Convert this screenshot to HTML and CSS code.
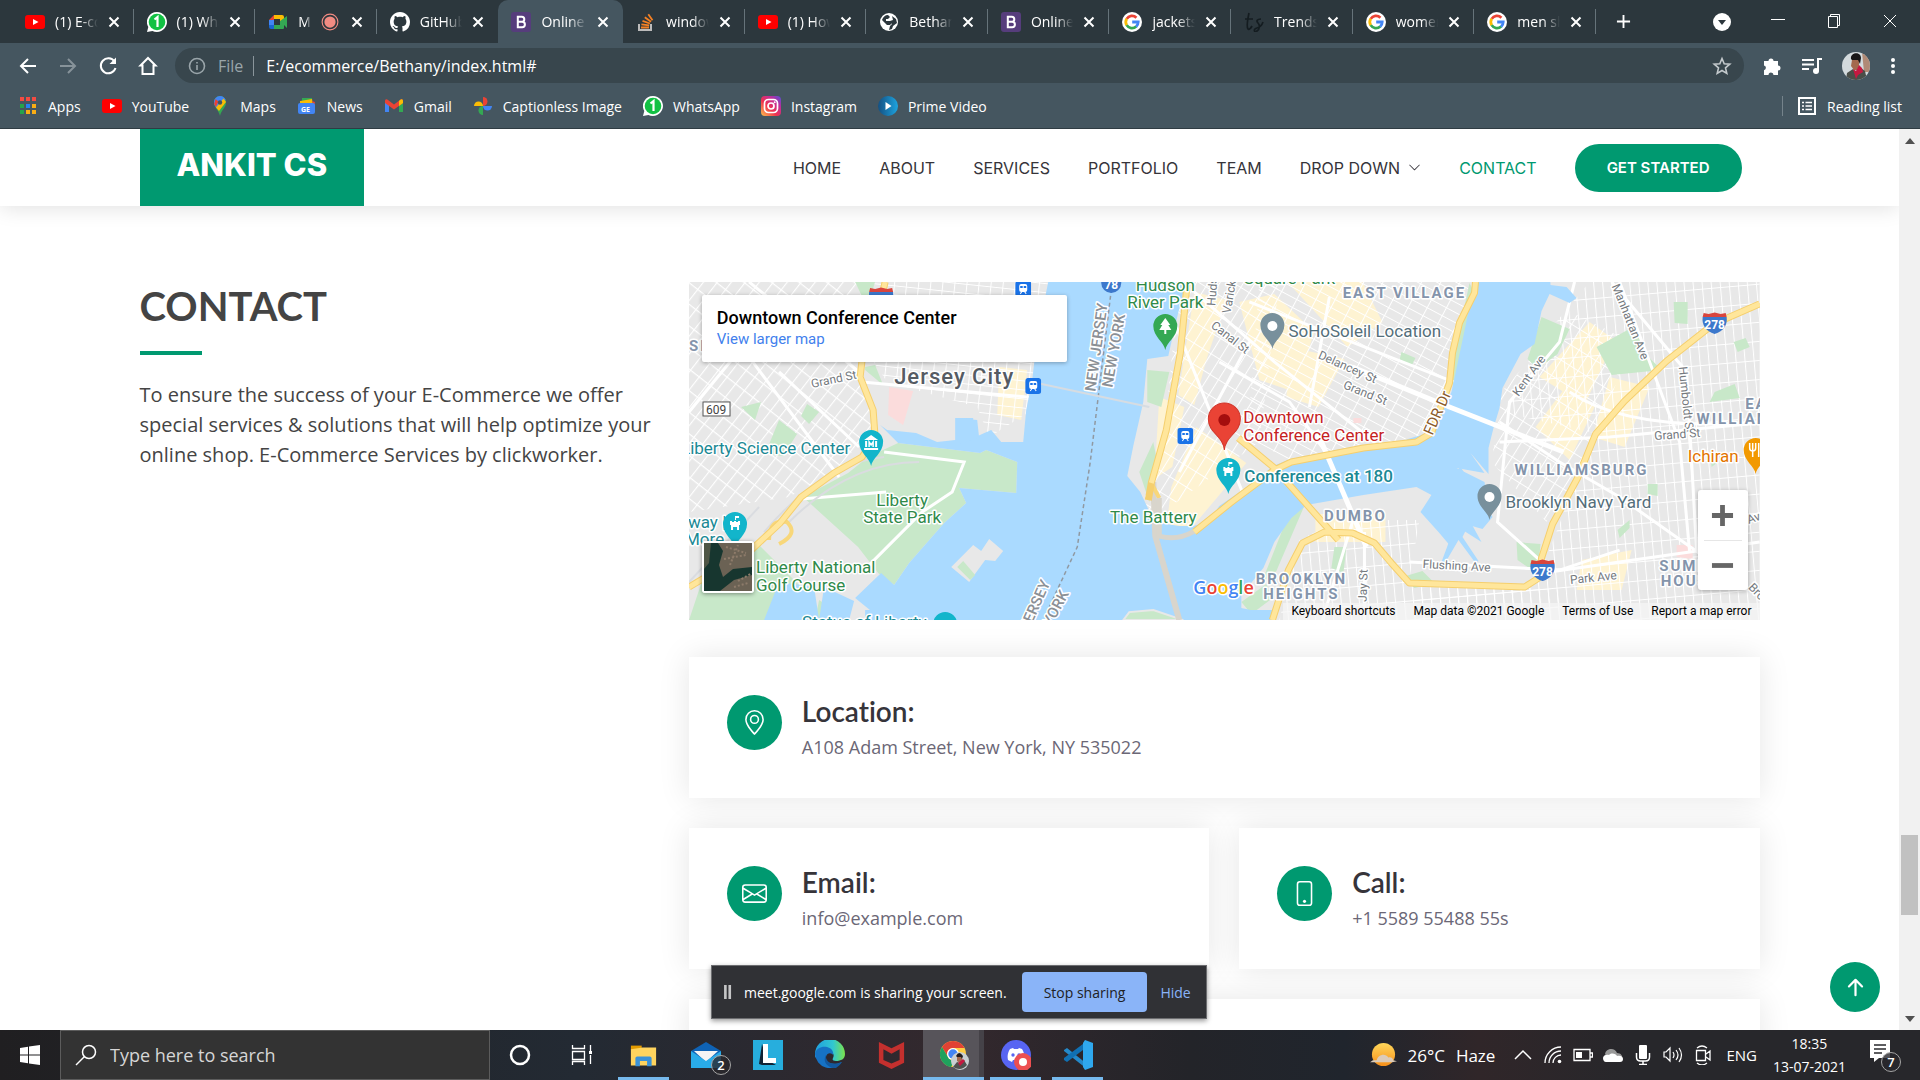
FILE: index.html
```html
<!DOCTYPE html>
<html lang="en">
<head>
<meta charset="utf-8">
<meta name="viewport" content="width=device-width, initial-scale=1">
<title>Online shop - Contact</title>
<link rel="stylesheet" href="styles.css">
</head>
<body>
<svg class="sprite" aria-hidden="true">
  <symbol id="i-close" viewBox="0 0 12 12"><path d="M1.500 1.500l9 9m0-9l-9 9" stroke="currentColor" stroke-width="2" fill="none"/></symbol>
  <symbol id="i-youtube" viewBox="0 0 20 20"><rect y="3" width="20" height="14" rx="3" fill="#f00"/><path d="M8 7l5.500 3L8 13z" fill="#fff"/></symbol>
  <symbol id="i-whatsapp" viewBox="0 0 20 20"><path d="M10 0a10 10 0 1 1-4.600 18.900L0 20l1.300-5A10 10 0 0 1 10 0z" fill="#fff"/><circle cx="10" cy="10" r="8.300" fill="#12c143"/><path d="M7.500 7.500L10.500 5v10" stroke="#fff" stroke-width="2.200" fill="none"/></symbol>
  <symbol id="i-bootstrap" viewBox="0 0 20 20"><rect width="20" height="20" rx="3" fill="#563d7c"/><path d="M6.800 4.800h4a2.500 2.500 0 0 1 0 5h-4zm0 5h4.400a2.700 2.700 0 0 1 0 5.400H6.800z" fill="none" stroke="#fff" stroke-width="2"/></symbol>
  <symbol id="i-google" viewBox="0 0 20 20"><circle cx="10" cy="10" r="10" fill="#fff"/><g fill="none" stroke-width="2.800"><path d="M4.700 6.900A6.200 6.200 0 0 1 14.400 5.700" stroke="#ea4335"/><path d="M4.700 13.200A6.200 6.200 0 0 1 4.700 6.800" stroke="#fbbc05"/><path d="M14.200 14.500A6.200 6.200 0 0 1 4.700 13.100" stroke="#34a853"/><path d="M10.200 10h6a6.200 6.200 0 0 1-2.100 4.600" stroke="#4285f4"/></g></symbol>
  <symbol id="i-github" viewBox="0 0 16 16"><path fill="#fff" d="M8 0C3.580 0 0 3.580 0 8c0 3.540 2.290 6.530 5.470 7.590.4.070.55-.17.55-.38 0-.19-.01-.82-.01-1.490-2.010.37-2.530-.49-2.690-.94-.09-.23-.48-.94-.82-1.130-.28-.15-.68-.52-.01-.53.63-.01 1.080.58 1.230.82.72 1.210 1.870.87 2.330.66.070-.52.28-.87.51-1.070-1.780-.2-3.640-.89-3.640-3.950 0-.87.31-1.590.82-2.150-.08-.2-.36-1.020.08-2.120 0 0 .67-.21 2.200.82.64-.18 1.320-.27 2-.27s1.360.09 2 .27c1.530-1.040 2.200-.82 2.200-.82.44 1.100.16 1.920.08 2.120.51.56.82 1.270.82 2.150 0 3.070-1.870 3.750-3.650 3.950.29.25.54.73.54 1.480 0 1.070-.01 1.930-.01 2.200 0 .21.15.46.55.38A8.010 8.010 0 0 0 16 8c0-4.420-3.580-8-8-8z"/></symbol>
  <symbol id="i-pin" viewBox="0 0 26 38"><path d="M13 37c-1-8-12-13-12-24a12 12 0 0 1 24 0c0 11-11 16-12 24z" fill="currentColor"/></symbol>
  <symbol id="i-shield" viewBox="0 0 26 22"><path d="M1 5h24c1 8-3 14-12 17C4 19 0 13 1 5z" fill="#3c78cc"/><path d="M2 1l5 1 6-1.500L19 2l5-1 1 4H1z" fill="#d9453d"/></symbol>
  <symbol id="i-train" viewBox="0 0 16 16"><rect width="16" height="16" rx="3" fill="#1a73e8"/><rect x="4" y="3" width="8" height="8" rx="2" fill="#fff"/><path d="M5 5h2.500v2H5zm3.500 0H11v2H8.500z" fill="#1a73e8"/><path d="M5 13l1.500-2m4.500 2l-1.500-2" stroke="#fff"/></symbol>
  <symbol id="i-tower" viewBox="0 0 14 14"><path d="M7 0h4v2H8v2h-1zM2 5h2v1h2V5h2v1h2V5h2v4h-1v5H9v-3H5v3H3V9H2z" fill="#fff"/></symbol>
</svg>

<header class="browser">
  <div class="tabstrip">
    <div class="tabs">
      <div class="tab"><svg class="fav"><use href="#i-youtube"/></svg><span class="tab-title">(1) E-commerce</span><button class="tab-x" aria-label="Close tab"><svg><use href="#i-close"/></svg></button></div>
      <div class="tab"><svg class="fav"><use href="#i-whatsapp"/></svg><span class="tab-title">(1) WhatsApp</span><button class="tab-x" aria-label="Close tab"><svg><use href="#i-close"/></svg></button></div>
      <div class="tab"><svg class="fav" viewBox="0 0 20 20"><path d="M1 8l5-5v5z" fill="#ea4335"/><path d="M6 3h8a2 2 0 0 1 2 2v4h-4V7H6z" fill="#fbbc04"/><path d="M1 8h5v5H1z" fill="#4285f4"/><path d="M1 13h5v4H3a2 2 0 0 1-2-2z" fill="#1967d2"/><path d="M6 13h6V9l7-5v12l-3-3v3a1 1 0 0 1-1 1H6z" fill="#34a853"/></svg><span class="tab-title">Meet</span><svg class="rec" viewBox="0 0 16 16"><circle cx="8" cy="8" r="7" fill="none" stroke="#f28b82" stroke-width="1"/><circle cx="8" cy="8" r="5" fill="#f28b82"/></svg><button class="tab-x" aria-label="Close tab"><svg><use href="#i-close"/></svg></button></div>
      <div class="tab"><svg class="fav"><use href="#i-github"/></svg><span class="tab-title">GitHub - shop</span><button class="tab-x" aria-label="Close tab"><svg><use href="#i-close"/></svg></button></div>
      <div class="tab tab-active"><svg class="fav"><use href="#i-bootstrap"/></svg><span class="tab-title">Online shop</span><button class="tab-x" aria-label="Close tab"><svg><use href="#i-close"/></svg></button></div>
      <div class="tab"><svg class="fav" viewBox="0 0 20 20"><path d="M3 12v6h12v-6" fill="none" stroke="#bcbbbb" stroke-width="2"/><path d="M5 15.500h8M5.400 12.300l7.800 1M6.500 8.800l7.400 2.700M8.800 5.300l6.200 4.500M12.300 2.300l4.200 6" stroke="#f48024" stroke-width="1.800"/></svg><span class="tab-title">windows - stack</span><button class="tab-x" aria-label="Close tab"><svg><use href="#i-close"/></svg></button></div>
      <div class="tab"><svg class="fav"><use href="#i-youtube"/></svg><span class="tab-title">(1) How to</span><button class="tab-x" aria-label="Close tab"><svg><use href="#i-close"/></svg></button></div>
      <div class="tab"><svg class="fav" viewBox="0 0 20 20"><circle cx="10" cy="10" r="9" fill="#fff"/><path d="M3 8c1-3 3-5 6-5l2 2-2 2H7v2h4l2 2-2 2H8zM13 4l4 3 1 4-4 3-1 3-3 1 1-4 2-2-2-3 3-1z" fill="#2c373d"/></svg><span class="tab-title">Bethany</span><button class="tab-x" aria-label="Close tab"><svg><use href="#i-close"/></svg></button></div>
      <div class="tab"><svg class="fav"><use href="#i-bootstrap"/></svg><span class="tab-title">Online shop</span><button class="tab-x" aria-label="Close tab"><svg><use href="#i-close"/></svg></button></div>
      <div class="tab"><svg class="fav"><use href="#i-google"/></svg><span class="tab-title">jackets for</span><button class="tab-x" aria-label="Close tab"><svg><use href="#i-close"/></svg></button></div>
      <div class="tab"><svg class="fav" viewBox="0 0 20 20"><path d="M5 1C4 6 2 14 4 17c1 1 3-1 4-3M1 7h8M17 7c-4 0-5 2-3 4s2 6-1 8-4-2 0-3 5-3 6-6" fill="none" stroke="#141c20" stroke-width="1.700"/></svg><span class="tab-title">Trends shop</span><button class="tab-x" aria-label="Close tab"><svg><use href="#i-close"/></svg></button></div>
      <div class="tab"><svg class="fav"><use href="#i-google"/></svg><span class="tab-title">women</span><button class="tab-x" aria-label="Close tab"><svg><use href="#i-close"/></svg></button></div>
      <div class="tab"><svg class="fav"><use href="#i-google"/></svg><span class="tab-title">men shirts</span><button class="tab-x" aria-label="Close tab"><svg><use href="#i-close"/></svg></button></div>
    </div>
    <button class="new-tab" aria-label="New tab"><svg viewBox="0 0 16 16"><path d="M8 1v14M1 8h14" stroke="#fff" stroke-width="2"/></svg></button>
    <div class="window-controls">
      <button aria-label="Search tabs"><svg viewBox="0 0 20 20"><circle cx="10" cy="10" r="9" fill="#fff"/><path d="M6 8h8l-4 5z" fill="#2c373d"/></svg></button>
      <button aria-label="Minimize"><svg viewBox="0 0 20 20"><path d="M3 7.500h14" stroke="#fff"/></svg></button>
      <button aria-label="Restore"><svg viewBox="0 0 20 20"><path d="M4.500 4.500h9v11h-9zM6.500 4V2.500h9v11H14" fill="none" stroke="#fff"/></svg></button>
      <button aria-label="Close window"><svg viewBox="0 0 20 20"><path d="M4 3l12 12M16 3L4 15" stroke="#fff"/></svg></button>
    </div>
  </div>
  <div class="toolbar">
    <button class="tool" aria-label="Back"><svg viewBox="0 0 20 20"><path d="M18 10H3M10 3l-7 7 7 7" fill="none" stroke="#fff" stroke-width="2"/></svg></button>
    <button class="tool" aria-label="Forward"><svg viewBox="0 0 20 20"><path d="M2 10h15M10 3l7 7-7 7" fill="none" stroke="#87939a" stroke-width="2"/></svg></button>
    <button class="tool" aria-label="Reload"><svg viewBox="0 0 20 20"><path d="M16.500 5.500A7.500 7.500 0 1 0 17.500 12" fill="none" stroke="#fff" stroke-width="2"/><path d="M18 1.500V8h-6.500z" fill="#fff"/></svg></button>
    <button class="tool" aria-label="Home"><svg viewBox="0 0 20 20"><path d="M4.500 18V9.500H2.500L10 2l7.500 7.500h-2V18z" fill="none" stroke="#fff" stroke-width="2"/></svg></button>
    <div class="omnibox">
      <svg class="info" viewBox="0 0 20 20"><circle cx="10" cy="10" r="7.500" fill="none" stroke="#9aa5aa" stroke-width="1.600"/><path d="M10 9v5M10 6v1.600" stroke="#9aa5aa" stroke-width="1.600"/></svg>
      <span class="scheme">File</span>
      <input class="url" type="text" aria-label="Address" value="E:/ecommerce/Bethany/index.html#">
      <svg class="star" viewBox="0 0 20 20"><path d="M10 2.500l2.200 5.200 5.600.5-4.300 3.700 1.300 5.500L10 14.500l-4.800 2.900 1.300-5.500L2.200 8.200l5.600-.5z" fill="none" stroke="#c3c9cc" stroke-width="1.600"/></svg>
    </div>
    <div class="actions">
      <svg viewBox="0 0 20 20"><path d="M2 5h4.500a2.500 2.500 0 1 1 5 0H16v4.500a2.500 2.500 0 1 1 0 5V19h-4.500a2.300 2.300 0 0 0-5 0H2v-4.800a2.400 2.400 0 0 0 0-4.700z" fill="#fff"/></svg>
      <svg viewBox="0 0 20 20"><path d="M0 4h12M0 8.500h12M0 13h7" stroke="#fff" stroke-width="2"/><path d="M16 15V3h4" fill="none" stroke="#fff" stroke-width="2"/><circle cx="14" cy="15" r="3" fill="#fff"/></svg>
      <svg class="avatar" viewBox="0 0 28 28"><defs><clipPath id="av"><circle cx="14" cy="14" r="14"/></clipPath></defs><g clip-path="url(#av)"><path d="M0 0h28v28H0z" fill="#d3dadd"/><path d="M20 0h8v20h-6z" fill="#b08a76"/><path d="M10 8h7v6l-2 4h-3l-3-4z" fill="#a3694e"/><path d="M9 7c-1-7 10-8 10-1l-1 6-2-4h-6z" fill="#181617"/><path d="M4 28l1-7 6-4 3 4 5-5 4 3 2 9z" fill="#4a4e49"/><path d="M11 17l3 2 3-6 3 3 1 4-5 3-2 4z" fill="#c61840"/></g></svg>
      <svg class="menu" viewBox="0 0 6 20"><g fill="#fff"><circle cx="3" cy="4" r="2"/><circle cx="3" cy="10" r="2"/><circle cx="3" cy="16" r="2"/></g></svg>
    </div>
  </div>
  <nav class="bookmarks" aria-label="Bookmarks">
    <a href="#"><svg viewBox="0 0 20 20"><path d="M2 1h4v4H2zM8 1h4v4H8zM14 1h4v4h-4z" fill="#f44b42"/><path d="M2 8h4v4H2zM2 14h4v4H2z" fill="#26a34a"/><path d="M8 8h4v4H8z" fill="#2483f4"/><path d="M14 8h4v4h-4zM8 14h4v4H8zM14 14h4v4h-4z" fill="#f9ad14"/></svg>Apps</a>
    <a href="#"><svg><use href="#i-youtube"/></svg>YouTube</a>
    <a href="#"><svg viewBox="0 0 20 20"><path d="M10 20C9 14 4 12 4 6.500A6 6 0 0 1 10 0a6 6 0 0 1 6 6.500C16 12 11 14 10 20z" fill="#34a853"/><path d="M4 6.500A6 6 0 0 1 10 0c3 0 5 2 5.700 4L6.500 12C5 10 4 8.500 4 6.500z" fill="#4285f4"/><path d="M4.200 8L5.500 3l3 2.500L5.800 11z" fill="#ea4335"/><path d="M6 11.500l7.500-9L16 6l-7 9z" fill="#fbbc04"/><circle cx="10" cy="6.500" r="2.200" fill="#45565f"/></svg>Maps</a>
    <a href="#"><svg viewBox="0 0 20 20"><path d="M5 2h10v6H5z" fill="#34a853"/><path d="M3 5l12-2 1 6H3z" fill="#fbbc04"/><path d="M15 5l3 1-1 5z" fill="#ea4335"/><rect x="1" y="7" width="17" height="11" rx="2" fill="#4285f4"/><text x="4" y="16" class="tiny">GE</text></svg>News</a>
    <a href="#"><svg viewBox="0 0 20 20"><path d="M1 5v11h4V8z" fill="#4285f4"/><path d="M15 8v8h4V5z" fill="#34a853"/><path d="M1 5c0-2 2-2 3-1l6 4.500L16 4c1-1 3-1 3 1v2l-9 6.500L1 7z" fill="#ea4335"/><path d="M15 5l1-1c1-1 3-1 3 1v2l-4 3z" fill="#fbbc04"/></svg>Gmail</a>
    <a href="#"><svg viewBox="0 0 20 20"><path d="M10 10V1a4.500 4.500 0 0 1 0 9z" fill="#ea4335"/><path d="M10 10h9a4.500 4.500 0 0 1-9 0z" fill="#4285f4"/><path d="M10 10v9a4.500 4.500 0 0 1 0-9z" fill="#34a853"/><path d="M10 10H1a4.500 4.500 0 0 1 9 0z" fill="#fbbc04"/></svg>Captionless Image</a>
    <a href="#"><svg><use href="#i-whatsapp"/></svg>WhatsApp</a>
    <a href="#"><svg viewBox="0 0 20 20"><defs><linearGradient id="ig" x1="0" y1="1" x2="1" y2="0"><stop offset="0" stop-color="#fec44c"/><stop offset=".4" stop-color="#f0344d"/><stop offset=".7" stop-color="#c42c96"/><stop offset="1" stop-color="#5050dc"/></linearGradient></defs><rect width="20" height="20" rx="4" fill="url(#ig)"/><rect x="3.500" y="3.500" width="13" height="13" rx="4" fill="none" stroke="#fff" stroke-width="1.700"/><circle cx="10" cy="10" r="3" fill="none" stroke="#fff" stroke-width="1.700"/><circle cx="13.700" cy="6.300" r="1" fill="#fff"/></svg>Instagram</a>
    <a href="#"><svg viewBox="0 0 20 20"><defs><linearGradient id="pv" x1="0" x2="1"><stop offset="0" stop-color="#145082"/><stop offset="1" stop-color="#1da4e0"/></linearGradient></defs><circle cx="10" cy="10" r="10" fill="url(#pv)"/><path d="M7.500 6l6 4-6 4z" fill="#fff"/></svg>Prime Video</a>
    <a class="reading" href="#"><svg viewBox="0 0 20 20"><path d="M2 2h16v16H2z" fill="none" stroke="#fff" stroke-width="2"/><path d="M5 6.500h2m1.500 0H15M5 10h2m1.500 0H15M5 13.500h2m1.500 0H15" stroke="#fff" stroke-width="1.600"/></svg>Reading list</a>
  </nav>
</header>

<div class="viewport">
  <div class="page">
    <header class="site-header">
      <div class="container site-bar">
        <a class="logo" href="#">ANKIT CS</a>
        <nav class="site-nav" aria-label="Main">
          <a href="#">HOME</a>
          <a href="#">ABOUT</a>
          <a href="#">SERVICES</a>
          <a href="#">PORTFOLIO</a>
          <a href="#">TEAM</a>
          <a href="#">DROP DOWN <svg viewBox="0 0 16 16"><path d="M1.646 4.646a.5.5 0 0 1 .708 0L8 10.293l5.646-5.647a.5.5 0 0 1 .708.708l-6 6a.5.5 0 0 1-.708 0l-6-6a.5.5 0 0 1 0-.708z" fill="currentColor"/></svg></a>
          <a class="current" href="#">CONTACT</a>
          <a class="cta" href="#">GET STARTED</a>
        </nav>
      </div>
    </header>
    <main class="container contact">
      <section class="intro">
        <h2>CONTACT</h2>
        <p>To ensure the success of your E-Commerce we offer special services &amp; solutions that will help optimize your online shop. E-Commerce Services by clickworker.</p>
      </section>
      <div class="details">
        <section class="map" aria-label="Map">
          <svg class="map-art" viewBox="0 0 1070 338" preserveAspectRatio="xMidYMid slice">
            <defs>
              <pattern id="g1" width="11" height="17" patternUnits="userSpaceOnUse" patternTransform="rotate(38)"><path d="M0 0h11M0 0v17" stroke="#fff" stroke-width="2.200"/></pattern>
              <pattern id="g2" width="12" height="9" patternUnits="userSpaceOnUse" patternTransform="rotate(6)"><path d="M0 0h12M0 0v9" stroke="#fff" stroke-width="2"/></pattern>
              <pattern id="g3" width="17" height="9" patternUnits="userSpaceOnUse" patternTransform="rotate(28)"><path d="M0 0h17M0 0v9" stroke="#fff" stroke-width="2"/></pattern>
              <pattern id="g4" width="9" height="19" patternUnits="userSpaceOnUse" patternTransform="rotate(-5)"><path d="M0 0h9M0 0v19" stroke="#fff" stroke-width="2"/></pattern>
              <pattern id="g5" width="10" height="18" patternUnits="userSpaceOnUse" patternTransform="rotate(32)"><path d="M0 0h10M0 0v18" stroke="#fff" stroke-width="2"/></pattern>
            </defs>
            <rect width="1070" height="338" fill="#e8e8e8"/>
            <g fill="#fef3d2">
              <path d="M505 10l32 8-20 60-12 45-16-10zM470 115l25 10-12 60-18 12zM482 205l25-60 50 36-55 65h-25zM310 85l28 3-6 50-24-5zM550 20l35-8 40 38-20 60-35-12zM600 65l55 12-26 48-32-10zM598 0h75l20 40-35 25zM850 95l50-55 25 18-30 65zM846 145l30-40 30 18-26 55zM920 95l40 10-25 60-32-10zM626 232h70v28h-70zM892 278l50-10-10 40h-45z"/>
            </g>
            <path d="M0 0h190l-17 90 12 55-40 45-45 25L0 230z" fill="url(#g1)"/>
            <path d="M185 0h175l-20 130-40 25-12-30-90-25-20-30z" fill="url(#g2)"/>
            <path d="M490 0h100l-20 160-110 80-5-30 20-60z" fill="url(#g5)"/>
            <path d="M570 0h210l-22 120-25 35-130 25-45-25z" fill="url(#g3)"/>
            <path d="M850 60L900 0h170v338H725v-32h120l60-155-90-20z" fill="url(#g4)"/>
            <path d="M812 110l70-80 60 30-45 120-40 60-55-60z" fill="url(#g5)"/>
            <path d="M590 338l20-80 40-20h80l-10 60 150 10v30z" fill="url(#g4)"/>
            <g fill="#c8e8c9">
              <path d="M209 161l82 10 6-3 31 12-1 31-57-5 7 15-22 20-35 40-15 22-16-12-20-26-55-50 45-24 20-16z"/>
              <path d="M0 338l20-60 50-15 40 40-10 35zM130 318l30 20h-34zM52 125l20-5-6 18zM90 138l18 14-14 22-18-2zM118 122l12 8-10 12-8-8zM458 88l22 2-8 35-14-5zM450 190l14-30 4 20-8 40zM176 85l10-2 8 20-18-15zM166 0h20l-8 25z"/>
              <path d="M852 35l28 12-12 25-20 15-10-10zM907 65l40-22 5 25 20 20-50 5zM984 20h14v22l-13-1zM1025 110l20-8 5 14-30 4zM1044 60l12-4 4 9-12 5zM958 202h10v12l-10-2zM827 260l24 2-3 30-20-14zM713 295l20-6 12 12-20 5zM602 225l15-6-30 70-15 12 10-25zM552 320l25-18 5 15-20 15zM763 121l22-110-5-10-16 75zM742 145l18-20-6 25-18 16-20 5zM712 70l14 6-4 8-12-6zM1020 172l10-3v10l-8 6zM645 265h12l-3 26-12-5zM928 248l12-10v8l-10 10z"/>
            </g>
            <path d="M200 105l24 4-10 34-15-10zM987 263h16v14l-16-2zM664 136h8v5h-8z" fill="#fbdcdc"/>
            <g fill="none" stroke="#fff" stroke-width="3">
              <path d="M0 130l90-110M90 90l80 75M173 100l130 12 45 4M60 75l90 120M60 0l110 90M195 170l80 10-12 30-30 20-60 60M112 217l85-7M485 40l80 200M560 60l-70 130M505 10l80 70 100 80M560 20l204 80M640 15l-20 110M530 80l70 40 40 55M810 160l110-5 150-14M810 140l60 40 60 35 85 60M885 0l-15 60-50 60-12 120 50 45M880 110q60 40 190 30M922 0l75 90 10 180M930 0l60 160 10 110M860 290l210-30M720 280l150 8 60-20M663 240l-30 98M675 250v88"/>
            </g>
            <g fill="none" stroke="#dadce0" stroke-width="2"><path d="M100 240q60-60 130-60M75 250q60-70 120-75M0 300l70-75"/></g>
            <g fill="#aadaff">
              <path d="M359 0l-11 55-5 43-6 30-3 32h-22l-10-12-18 8v-20h-18v22l-18 2-21-9-29-3-7-5 18 18 82 10 6-3 31 12-1 31-57-5 7 15-22 20-35 40-15 22-13-12-26 25 21 17h398l-33-7v-13l22-27 11-26 17-24 15-13 57-10 53-8 15 8-11 17 18 20 11 13 10-17 22 14-11-20 18-10-4-30-28-14 28 5-14-20 18 21v-26l5-20 6-20 3-20 18-34 14-10 7-33 8-17 20 9 7-5-10-11-16-2-1-14h-73l-11 55-14 66-21 40-32 10-47 5-61 12-17 7-25 20-29 20-11 16-15 4h-14l-25-4-14-30-13-16 6-30 10-44 4-43 21-3 6-27 9-37 3-21z"/>
              <path d="M176 328h410v10H176z"/>
              <path d="M270 136l18 2 2 18-20 6zM90 300l35 5 5 33H75zM135 305l30 14-5 19h-30z"/>
              <path d="M741 215l30-30 20 30 12 20-10 12-14-4-6 12 16 24-3 2-17-23-14 24-3-2 10-27-10-14z"/>
            </g>
            <path d="M262 285l22-22 8 6 8-12 14 12-8 10-10-1-16 22z" fill="#e8e8e8"/><path d="M268 285l6-6 12 14-5 5z" fill="#c8e8c9"/><path d="M434 338l6-8 24-2 30 10z" fill="#c8e8c9" stroke="#e8e8e8" stroke-width="2"/>
            <path d="M423 0l-22 180-13 85-28 60" fill="none" stroke="#9099a2" stroke-width="1.500" stroke-dasharray="4 3"/>
            <path d="M343 100l117 25" stroke="#d6dce2" stroke-width="2"/>
            <path d="M464 200l2 54 24 84" fill="none" stroke="#d9d5cc" stroke-width="6"/>
            <g fill="none" stroke="#fff" stroke-width="5"><path d="M627 148l50 117M663 85l97 40 114 45"/></g>
            <g fill="none" stroke-linejoin="round">
              <path d="M80 258q0-22 18-18 12 12-8 22M462 201l8 15" stroke="#f8d77a" stroke-width="4"/>
              <path id="hw" d="M196 0l-8 35-15 43-2 17 13 33 2 27-13 20-28 16-33 24-21 26-29 27L0 305M498 0l-7 71-14 77-15 53-3 17M505 250l36-29 44-33 17-8 72-14 53-6 15-9 18-50 3-30 7-30 15-30 1-11M549 156l36 30 64 72M583 338l16-50 14-27 22-11 28 1 22 10 17 20 18 20 115 4 14-9 3-20 11-34 25-46 18-44 29-33 42-40 47-37 46-20" stroke="#f5cf6e" stroke-width="7"/>
            </g>
            <path d="M470 216v38q18 5 35-5" fill="none" stroke="#d9d5cc" stroke-width="5"/>
            <path d="M196 0l-8 35-15 43-2 17 13 33 2 27-13 20-28 16-33 24-21 26-29 27L0 305M498 0l-7 71-14 77-15 53M505 250l36-29 44-33 17-8 72-14 53-6 15-9 18-50 3-30 7-30 15-30 1-11M549 156l36 30 64 72M583 338l16-50 14-27 22-11 28 1 22 10 17 20 18 20 115 4 14-9 3-20 11-34 25-46 18-44 29-33 42-40 47-37 46-20" fill="none" stroke="#ffe69b" stroke-width="5" stroke-linejoin="round"/>
            <use href="#i-shield" x="179" y="5" width="26" height="22"/><use href="#i-shield" x="1012" y="30" width="26" height="22"/><use href="#i-shield" x="840" y="277" width="26" height="22"/>
            <circle cx="422" cy="1" r="10" fill="#3c78cc"/>
            <g class="shield-text"><text x="1025" y="47">278</text><text x="853" y="294">278</text><text x="422" y="7">78</text></g>
            <use href="#i-train" x="326" y="-1" width="16" height="16"/><use href="#i-train" x="336" y="96" width="16" height="16"/><use href="#i-train" x="488" y="146" width="16" height="16"/>
            <rect x="14" y="120" width="27" height="14" fill="#fff" stroke="#555"/><text class="m-route" x="27" y="132">609</text>
            <g class="m-street">
              <text transform="translate(123 106) rotate(-12)">Grand St</text>
              <text transform="translate(526 24) rotate(-86)">Hudson</text>
              <text transform="translate(541 32) rotate(-80)">Varick</text>
              <text transform="translate(521 45) rotate(38)">Canal St</text>
              <text transform="translate(628 76) rotate(24)">Delancey St</text>
              <text transform="translate(653 106) rotate(22)">Grand St</text>
              <text transform="translate(829 115) rotate(-54)">Kent Ave</text>
              <text transform="translate(922 4) rotate(68)">Manhattan Ave</text>
              <text transform="translate(989 85) rotate(84)">Humboldt St</text>
              <text transform="translate(965 158) rotate(-4)">Grand St</text>
              <text transform="translate(733 286) rotate(3)">Flushing Ave</text>
              <text transform="translate(881 302) rotate(-6)">Park Ave</text>
              <text transform="translate(677 320) rotate(-88)">Jay St</text>
              <text transform="translate(1059 242) rotate(-20)">Ave</text>
              <text transform="translate(1058 306) rotate(45)">Broadway</text>
            </g>
            <text class="m-fdr" transform="translate(743 154) rotate(-66)">FDR Dr</text>
            <g class="m-border"><text transform="translate(406 110) rotate(-82)">NEW JERSEY</text><text transform="translate(423 106) rotate(-80)">NEW YORK</text><text transform="translate(325 382) rotate(-66)">NEW JERSEY</text><text transform="translate(345 377) rotate(-62)">NEW YORK</text></g>
            <text class="m-city" x="265" y="102">Jersey City</text>
            <g class="m-area"><text x="715" y="16">EAST VILLAGE</text><text x="892" y="193">WILLIAMSBURG</text><text x="666" y="239">DUMBO</text><text x="612" y="302">BROOKLYN</text><text x="612" y="317">HEIGHTS</text><text x="1078" y="127">EAST</text><text x="1056" y="142">WILLIAMSB</text><text x="1006" y="289">SUMNER</text><text x="1006" y="304">HOUSES</text><text x="20" y="69">SIDE</text></g>
            <g class="m-park"><text x="476" y="9">Hudson</text><text x="476" y="26">River Park</text><text x="600" y="2">Square Park</text><text x="213" y="224">Liberty</text><text x="213" y="241">State Park</text><text x="464" y="241">The Battery</text><text class="start" x="67" y="291">Liberty National</text><text class="start" x="67" y="309">Golf Course</text></g>
            <g class="m-teal"><text x="-8" y="172">Liberty Science Center</text><text x="-29" y="246">Railway |</text><text x="-4" y="263">More</text><text x="113" y="346">Statue of Liberty</text><text class="strong" x="555" y="200">Conferences at 180</text></g>
            <g class="m-slate"><text x="599" y="55">SoHoSoleil Location</text><text x="816" y="226">Brooklyn Navy Yard</text></g>
            <g class="m-red"><text x="554" y="141">Downtown</text><text x="554" y="159">Conference Center</text></g>
            <text class="m-orange" x="998" y="180">Ichiran</text>
            <g color="#12b5cb"><use href="#i-pin" x="169" y="147" width="26" height="38"/><use href="#i-pin" x="33" y="229" width="26" height="38"/><use href="#i-pin" x="526" y="175" width="26" height="38"/><use href="#i-pin" x="243" y="329" width="26" height="38"/></g>
            <use href="#i-pin" x="463" y="31" width="26" height="38" color="#34a853"/><path d="M476 36l5 7h-2l3 5h-5v4h-2v-4h-5l3-5h-2z" fill="#fff"/>
            <g color="#78909c"><use href="#i-pin" x="570" y="30" width="26" height="38"/><use href="#i-pin" x="787" y="201" width="26" height="38"/></g>
            <circle cx="583" cy="44" r="5" fill="#fff"/><circle cx="800" cy="215" r="5" fill="#fff"/>
            <use href="#i-pin" x="1053" y="155" width="26" height="38" color="#f29900"/><path d="M1060 161v5q0 3 3 3v6m3-14v5q0 3-3 3m0-8v8m6-8v14" stroke="#fff" stroke-width="1.500" fill="none"/>
            <use href="#i-tower" x="532" y="180" width="14" height="14"/><use href="#i-tower" x="39" y="234" width="14" height="14"/>
            <path d="M175 158l7-5 7 5zM176 159h2v6h-2zM186 159h2v6h-2zM175 166h14v2h-14z" fill="#fff"/><path d="M180 165v-5l2 3 2-3v5" fill="none" stroke="#fff" stroke-width="1.500"/>
            <path d="M535 168c-1-14-16-17-16-31a16 16 0 0 1 32 0c0 14-15 17-16 31z" fill="#ea4335" stroke="#d1362b"/><circle cx="535" cy="138" r="6" fill="#a50e0e"/>
            <text class="m-google" x="504" y="312"><tspan fill="#4285f4">G</tspan><tspan fill="#ea4335">o</tspan><tspan fill="#fbbc04">o</tspan><tspan fill="#4285f4">g</tspan><tspan fill="#34a853">l</tspan><tspan fill="#ea4335">e</tspan></text>
          </svg>
          <div class="map-card"><strong>Downtown Conference Center</strong><a href="#">View larger map</a></div>
          <button class="satellite" aria-label="Show satellite imagery"><svg viewBox="0 0 48 48"><rect width="48" height="48" fill="#6b6254"/><path d="M14 0l5 8-4 14 4 12 10-8 19-2v8l-18 5-14 11H0V0z" fill="#17362f"/><path d="M0 0h7L5 20 0 26z" fill="#4f5646"/><path d="M22 4l20 6M20 16l22-4M26 22l8-20M34 38l14-8M30 44l14-4" stroke="#8d7b6a" stroke-width="2" stroke-dasharray="2 2"/></svg></button>
          <div class="zoom"><button aria-label="Zoom in"><svg viewBox="0 0 24 24"><path d="M12 1v22M1 12h22" stroke="#666" stroke-width="5"/></svg></button><button aria-label="Zoom out"><svg viewBox="0 0 24 24"><path d="M1 12h22" stroke="#666" stroke-width="5"/></svg></button></div>
          <div class="map-legal"><a href="#">Keyboard shortcuts</a><span>Map data ©2021 Google</span><a href="#">Terms of Use</a><a href="#">Report a map error</a></div>
        </section>
        <div class="cards">
          <article class="card wide">
            <span class="badge"><svg viewBox="0 0 16 16"><path fill="#fff" d="M12.166 8.940c-.524 1.062-1.234 2.120-1.960 3.070A31.493 31.493 0 0 1 8 14.580a31.481 31.481 0 0 1-2.206-2.570c-.726-.95-1.436-2.008-1.960-3.070C3.304 7.867 3 6.862 3 6a5 5 0 0 1 10 0c0 .862-.305 1.867-.834 2.940zM8 16s6-5.686 6-10A6 6 0 0 0 2 6c0 4.314 6 10 6 10z"/><path fill="#fff" d="M8 8a2 2 0 1 1 0-4 2 2 0 0 1 0 4zm0 1a3 3 0 1 0 0-6 3 3 0 0 0 0 6z"/></svg></span>
            <div><h4>Location:</h4><p>A108 Adam Street, New York, NY 535022</p></div>
          </article>
          <article class="card">
            <span class="badge"><svg viewBox="0 0 16 16"><path fill="#fff" d="M0 4a2 2 0 0 1 2-2h12a2 2 0 0 1 2 2v8a2 2 0 0 1-2 2H2a2 2 0 0 1-2-2V4zm2-1a1 1 0 0 0-1 1v.217l7 4.200 7-4.200V4a1 1 0 0 0-1-1H2zm13 2.383-4.758 2.855L15 11.114v-5.730zm-.034 6.878L9.271 8.820 8 9.583 6.728 8.820l-5.694 3.440A1 1 0 0 0 2 13h12a1 1 0 0 0 .966-.739zM1 11.114l4.758-2.876L1 5.383v5.730z"/></svg></span>
            <div><h4>Email:</h4><p>info@example.com</p></div>
          </article>
          <article class="card">
            <span class="badge"><svg viewBox="0 0 16 16"><path fill="#fff" d="M11 1a1 1 0 0 1 1 1v12a1 1 0 0 1-1 1H5a1 1 0 0 1-1-1V2a1 1 0 0 1 1-1h6zM5 0a2 2 0 0 0-2 2v12a2 2 0 0 0 2 2h6a2 2 0 0 0 2-2V2a2 2 0 0 0-2-2H5z"/><circle cx="8" cy="13" r="1" fill="#fff"/></svg></span>
            <div><h4>Call:</h4><p>+1 5589 55488 55s</p></div>
          </article>
          <div class="card wide"></div>
        </div>
      </div>
    </main>
    <a class="to-top" href="#" aria-label="Back to top"><svg viewBox="0 0 16 16"><path fill="#fff" d="M8 12a.5.5 0 0 0 .5-.5V5.707l2.146 2.147a.5.5 0 0 0 .708-.708l-3-3a.5.5 0 0 0-.708 0l-3 3a.5.5 0 1 0 .708.708L7.500 5.707V11.500a.5.5 0 0 0 .5.500z"/></svg></a>
  </div>
  <div class="scrollbar" aria-hidden="true"><svg viewBox="0 0 10 6"><path d="M5 0l5 6H0z" fill="#505050"/></svg><span class="lead"></span><span class="thumb"></span><span class="trail"></span><svg viewBox="0 0 10 6"><path d="M5 6l5-6H0z" fill="#505050"/></svg></div>
  <div class="share" role="status">
    <svg viewBox="0 0 10 16"><path d="M2 0v16M7 0v16" stroke="#c4c5c6" stroke-width="3"/></svg>
    <span>meet.google.com is sharing your screen.</span>
    <button class="stop">Stop sharing</button>
    <button class="hide">Hide</button>
  </div>
</div>

<footer class="taskbar">
  <button class="start" aria-label="Start"><svg viewBox="0 0 20 20"><path d="M0 3l8-1.200V9.500H0zM9 1.600L20 0v9.500H9zM0 10.500h8v7.700L0 17zM9 10.500h11V20L9 18.400z" fill="#fff"/></svg></button>
  <label class="search"><svg viewBox="0 0 22 22"><circle cx="14" cy="8" r="6.500" fill="none" stroke="#fff" stroke-width="1.500"/><path d="M9.500 12.500L1 21" stroke="#fff" stroke-width="1.500"/></svg><input type="text" placeholder="Type here to search" aria-label="Search"></label>
  <div class="apps">
    <button aria-label="Cortana"><svg viewBox="0 0 30 30"><circle cx="15" cy="15" r="9" fill="none" stroke="#fff" stroke-width="2.500"/></svg></button>
    <button aria-label="Task view"><svg viewBox="0 0 30 30"><path d="M5.500 5v3.500h12V5M5.500 11.500h12v8h-12zM5.500 25v-3.500h12V25M23.500 5v6m0 4v9" fill="none" stroke="#fff" stroke-width="1.300"/><path d="M22 11h3v3h-3z" fill="#fff"/></svg></button>
    <button class="running" aria-label="File Explorer"><svg viewBox="0 0 30 30"><path d="M1 4h12v5H1z" fill="#e39b00"/><path d="M1 8l13-2h15v20H1z" fill="#ffd45e"/><path d="M6 27v-9a2 2 0 0 1 2-2h14a2 2 0 0 1 2 2v9h-5v-6h-8v6z" fill="#3a92d8"/></svg></button>
    <button aria-label="Mail"><svg viewBox="0 0 30 30"><path d="M0 11L15 2l15 9v17H0z" fill="#0f63b5"/><path d="M3 11h24L15 22z" fill="#f4f4f4"/><path d="M0 11l15 10 15-10v17H0z" fill="#29abe8"/></svg><span class="count">2</span></button>
    <button aria-label="Lenovo Vantage"><svg viewBox="0 0 30 30"><rect width="30" height="30" fill="#27aedd"/><path d="M9 4l-3 20 3 1h14l-9-5z" fill="#123"/><path d="M10 4h5v14h8v5H10z" fill="#fff"/></svg></button>
    <button aria-label="Edge"><svg viewBox="0 0 30 30"><defs><linearGradient id="ed"><stop offset="0" stop-color="#1f9fe0"/><stop offset=".6" stop-color="#31c7d0"/><stop offset="1" stop-color="#7be34b"/></linearGradient></defs><path d="M0 14A15 15 0 0 1 30 14c0 5-4 7-9 7-3 0-4-1-3-3 2-4-1-7-5-7-5 0-10 1-13 7z" fill="url(#ed)"/><path d="M0 14c1-6 7-8 12-7 4 1 7 4 6 8-1-2-6-3-7 2-1 6 6 9 16 5A15 15 0 0 1 0 14z" fill="#1672c4"/><path d="M11 15c-4 7 2 13 10 13a15 15 0 0 0 6-6c-8 4-17 1-16-7z" fill="#12589e"/></svg></button>
    <button aria-label="McAfee"><svg viewBox="0 0 30 30"><path d="M1 0l14 7 14-7v23l-14 7-14-7zm5 8v12l9 4 9-4V8l-9 5z" fill="#c4302e" fill-rule="evenodd"/></svg></button>
    <button class="running focused" aria-label="Chrome"><svg viewBox="0 0 30 30"><circle cx="14" cy="14" r="13" fill="#ffcd42"/><path d="M14 1a13 13 0 0 1 11.500 7H14a6 6 0 0 0-5 9L3 7a13 13 0 0 1 11-6z" fill="#e14234"/><path d="M3 7l6 10a6 6 0 0 0 7 3l-4 7A13 13 0 0 1 3 7z" fill="#1fa15d"/><circle cx="14" cy="14" r="6" fill="#fff"/><circle cx="14" cy="14" r="4.700" fill="#4285f4"/><circle cx="21" cy="21" r="9" fill="#c9cfd1"/><path d="M18 16h5v4l-2 3-3-2z" fill="#a3694e"/><path d="M17 16q3-6 7 0l-1 3-1-2h-4z" fill="#221c1d"/><path d="M14 27l4-5 3 1 4-3 3 5q-6 7-14 2z" fill="#50524f"/><path d="M19 23l5-4 2 2-5 5z" fill="#c61840"/></svg></button>
    <button class="running" aria-label="Discord"><svg viewBox="0 0 30 30"><circle cx="15" cy="15" r="15" fill="#5865f2"/><path d="M9 9l3-1 1 1h4l1-1 3 1c2 3 3 7 2 11l-4 2-1-2h-6l-1 2-4-2c-1-4 0-8 2-11z" fill="#fff"/><circle cx="12" cy="15" r="1.700" fill="#5865f2"/><circle cx="18" cy="15" r="1.700" fill="#5865f2"/><circle cx="22" cy="22" r="9" fill="#ed4f51"/><circle cx="22" cy="22" r="4" fill="#fff"/></svg></button>
    <button class="running" aria-label="Visual Studio Code"><svg viewBox="0 0 30 30"><path d="M1 10l3-2 20 16v5L1 11z" fill="#2489ca"/><path d="M1 20l3 2L24 7V1L1 18z" fill="#1070b3"/><path d="M22 0l8 3v24l-8 3-2-3V3z" fill="#2fa8ee"/></svg></button>
  </div>
  <div class="tray">
    <svg class="sun" viewBox="0 0 28 28"><defs><linearGradient id="sn" x2="0" y2="1"><stop offset="0" stop-color="#ffd75a"/><stop offset="1" stop-color="#f68f1a"/></linearGradient></defs><circle cx="14" cy="13" r="12" fill="url(#sn)"/><path d="M0 21l3-2h4c1-6 9-8 12-3 3-1 5 1 5 3l4 1-5 1z" fill="#dccbb8"/></svg>
    <span class="weather"><span>26°C</span><span>Haze</span></span>
    <svg viewBox="0 0 20 20"><path d="M2 14l8-8 8 8" fill="none" stroke="#fff" stroke-width="1.500"/></svg>
    <svg viewBox="0 0 20 20"><g fill="none" stroke="#fff" stroke-width="1.300"><path d="M2 18A16 16 0 0 1 18 2M6 18A12 12 0 0 1 18 6M10 18a8 8 0 0 1 8-8"/></g><circle cx="16.500" cy="16.500" r="1.800" fill="#fff"/></svg>
    <svg viewBox="0 0 20 20"><path d="M1 4.500h16v11H1zM17.500 8h2v4h-2" fill="none" stroke="#fff" stroke-width="1.300"/><path d="M3 7h6v6H3z" fill="#fff"/></svg>
    <svg viewBox="0 0 20 20"><path d="M2 9c1-6 10-7 12-1 4 0 6 3 5 6H5z" fill="#999"/><path d="M0 13c0-3 4-4 6-3 3-3 7-1 8 1 4-1 6 1 6 3s-1 3-3 3H3c-2 0-3-2-3-4z" fill="#fff"/></svg>
    <svg viewBox="0 0 20 20"><rect x="6" y="0" width="8" height="14" rx="1" fill="#fff"/><path d="M3.500 8v4q0 4 4 4h5q4 0 4-4V8M10 16v3M6 19.500h8" fill="none" stroke="#fff" stroke-width="1.500"/></svg>
    <svg viewBox="0 0 20 20"><path d="M1 7h2l4-4v13l-4-4H1zM10 7q2 3 0 6M13 5q4 5 0 10M16 3q5 7 0 14" fill="none" stroke="#fff" stroke-width="1.200"/></svg>
    <svg viewBox="0 0 20 20"><path d="M3.500 5.500h9v10h-9zM13 9l4-3v9l-4-3M4 3q5-4 10 0M4 18q5 4 10 0" fill="none" stroke="#fff" stroke-width="1.300"/></svg>
    <span class="lang">ENG</span>
    <span class="clock"><span>18:35</span><span>13-07-2021</span></span>
    <button class="notify" aria-label="Notifications"><svg viewBox="0 0 30 30"><path d="M0 0h20v18H9l-5 4v-4H0z" fill="#fff"/><path d="M4 5h12M4 9h12M4 13h8" stroke="#29282d" stroke-width="1.500"/></svg><span class="count">7</span></button>
  </div>
</footer>
</body>
</html>
```
FILE: styles.css
```css
:root {
  --brand: #009970;
  --ui: "Open Sans", "Noto Sans", sans-serif;
  --strip: #2c373d;
  --bar: #455660;
}
* { box-sizing: border-box; }
body {
  margin: 0;
  height: 100vh;
  display: flex;
  flex-direction: column;
  overflow: hidden;
  font-family: var(--ui);
  background: #fff;
}
button { border: 0; padding: 0; background: none; font: inherit; color: inherit; }
a { color: inherit; text-decoration: none; }
svg { display: block; flex: none; }
.sprite { position: absolute; width: 0; height: 0; }

/* browser frame */
.browser { flex: none; background: var(--bar); color: #fff; font-size: 14px; border-bottom: 1px solid #2f3c43; }
.tabstrip { display: flex; height: 43px; padding-left: 12px; background: var(--strip); }
.tabs { display: flex; flex: 0 1 1584px; min-width: 0; }
.tab { display: flex; flex: 1 1 27px; align-items: center; min-width: 0; padding: 0 14px 0 13px; position: relative; }
.tab::after { content: ""; position: absolute; right: 0; top: 9px; height: 25px; width: 1px; background: #66737a; }
.tab-active { flex-basis: 30px; background: var(--bar); border-radius: 10px 10px 0 0; }
.tab-active::after, .tab:has(+ .tab-active)::after { display: none; }
.fav { width: 20px; height: 20px; }
.tab-title {
  flex: 1; min-width: 0; margin: 0 10px 0 10px; overflow: hidden; white-space: nowrap;
  -webkit-mask-image: linear-gradient(90deg, #000 60%, transparent);
  mask-image: linear-gradient(90deg, #000 60%, transparent);
}
.rec { width: 18px; height: 18px; margin-right: 12px; }
.tab-x svg { width: 12px; height: 12px; }
.new-tab { padding: 0 20px; }
.new-tab svg { width: 15px; height: 15px; }
.window-controls { display: flex; margin-left: auto; padding-right: 2px; }
.window-controls button { width: 56px; display: grid; place-items: center; }
.window-controls svg { width: 20px; height: 20px; }
.toolbar { display: flex; align-items: center; height: 45px; padding: 0 24px 0 18px; }
.tool { width: 40px; display: flex; }
.tool svg { width: 20px; height: 20px; }
.omnibox { flex: 1; display: flex; align-items: center; height: 35px; margin-left: -3px; padding: 0 12px; border-radius: 18px; background: #38464d; font-size: 16px; }
.omnibox svg { width: 20px; height: 20px; }
.scheme { margin-left: 11px; padding-right: 10px; border-right: 1px solid #8a959b; color: #9aa5aa; line-height: 20px; }
.url { flex: 1; min-width: 0; margin-left: 12px; padding: 0; border: 0; background: none; color: #fff; font: 16px var(--ui); }
.actions { display: flex; align-items: center; gap: 20px; margin-left: 18px; }
.actions svg { width: 20px; height: 20px; }
.actions .avatar { width: 28px; height: 28px; }
.actions .menu { width: 6px; }
.bookmarks { display: flex; align-items: center; gap: 21px; height: 40px; padding: 0 18px 4px; }
.bookmarks a { display: flex; align-items: center; gap: 10px; white-space: nowrap; }
.bookmarks svg { width: 20px; height: 20px; }
.bookmarks .reading { margin-left: auto; padding-left: 14px; border-left: 1px solid #75838b; }
.tiny { font: 700 7px var(--ui); fill: #fff; }

/* page area */
.viewport { position: relative; flex: 1; min-height: 0; display: flex; overflow: hidden; }
.page { flex: 1; position: relative; min-width: 0; overflow: hidden; }
.container { width: calc(100% - 60px); max-width: 1620px; margin: 0 auto; }
.site-header { box-shadow: 0 2px 20px rgba(0, 0, 0, .12); }
.site-bar { display: flex; align-items: stretch; justify-content: space-between; height: 77px; }
.logo { padding: 16px 37px; background: var(--brand); color: #fff; font: 800 31px/40px Inter, sans-serif; white-space: nowrap; }
.site-nav { display: flex; align-items: center; gap: 38px; margin-right: 18px; color: #36343a; font: 400 16px/24px Inter, sans-serif; white-space: nowrap; }
.site-nav a { display: flex; align-items: center; gap: 8px; }
.site-nav svg { width: 13px; height: 13px; }
.site-nav .current { color: var(--brand); }
.site-nav .cta { padding: 12px 32px; border-radius: 25px; background: var(--brand); color: #fff; font-size: 15px; font-weight: 600; }
.contact { display: grid; grid-template-columns: 519fr 1070fr; gap: 30px; padding-top: 76px; }
.intro h2 { margin: 0; padding-bottom: 25px; color: #444; font: 700 40px/48px Lato, sans-serif; }
.intro h2::after { content: ""; display: block; width: 62px; height: 4px; margin-top: 21px; background: var(--brand); }
.intro p { margin: 0; color: #444; font-size: 20px; line-height: 30px; }
.map { position: relative; height: 338px; overflow: hidden; }
.map-art { width: 100%; height: 100%; font-family: Roboto, sans-serif; }
.map-art text { paint-order: stroke; stroke: #fff; stroke-width: 3px; stroke-linejoin: round; }
.map-art .shield-text text { fill: #fff; stroke: none; font-size: 12px; font-weight: 700; text-anchor: middle; }
.map-art .m-route { fill: #444; stroke: none; font-size: 12px; text-anchor: middle; }
.map-art .m-street text { fill: #74797e; font-size: 12px; }
.map-art .m-fdr { fill: #8a5a2b; font-size: 15px; }
.map-art .m-border text { fill: #8b9096; font-size: 15px; font-weight: 500; }
.map-art .m-city { fill: #555b63; font-size: 22px; font-weight: 500; text-anchor: middle; letter-spacing: 1px; }
.map-art .m-area text { fill: #8494ab; font-size: 15px; font-weight: 700; letter-spacing: 2px; text-anchor: middle; }
.map-art .m-park text { fill: #2f8a49; font-size: 17px; text-anchor: middle; }
.map-art .m-park .start { text-anchor: start; }
.map-art .m-teal text { fill: #1b8995; font-size: 17px; }
.map-art .m-teal .strong { font-weight: 500; }
.map-art .m-slate text { fill: #546e7a; font-size: 17px; }
.map-art .m-red text { fill: #c5221f; font-size: 17px; }
.map-art .m-orange { fill: #e37400; font-size: 17px; }
.map-art .m-google { font: 600 18px "Open Sans", sans-serif; }
.map-card { position: absolute; left: 13px; top: 13px; width: 365px; padding: 12px 15px; display: flex; flex-direction: column; background: #fff; border-radius: 2px; box-shadow: 0 1px 4px rgba(0, 0, 0, .3); font-family: Roboto, sans-serif; }
.map-card strong { font-size: 18px; line-height: 22px; font-weight: 500; }
.map-card a { color: #427fed; font-size: 15px; line-height: 21px; }
.satellite { position: absolute; left: 13px; bottom: 27px; border: 2px solid #fff; border-radius: 3px; box-shadow: 0 1px 4px rgba(0, 0, 0, .4); }
.satellite svg { width: 48px; height: 48px; }
.zoom { position: absolute; right: 12px; bottom: 30px; width: 50px; display: flex; flex-direction: column; background: #fff; border-radius: 3px; box-shadow: 0 1px 4px rgba(0, 0, 0, .3); }
.zoom button { height: 50px; margin: 0 6px; display: grid; place-items: center; }
.zoom button + button { border-top: 1px solid #e6e6e6; }
.zoom svg { width: 23px; height: 23px; }
.map-legal { position: absolute; right: 0; bottom: 0; display: flex; gap: 18px; padding: 0 8px; background: rgba(245, 245, 245, .75); color: #000; font: 12px/17px Roboto, sans-serif; white-space: nowrap; }
.cards { display: grid; grid-template-columns: 1fr 1fr; gap: 30px; margin-top: 37px; }
.card { min-height: 141px; display: flex; gap: 20px; padding: 38px; background: #fff; box-shadow: 0 0 30px rgba(0, 0, 0, .1); }
.wide { grid-column: 1 / -1; }
.badge { flex: none; width: 55px; height: 55px; border-radius: 50%; display: grid; place-items: center; background: var(--brand); }
.badge svg { width: 25px; height: 25px; }
.card h4 { margin: 0; color: #36343a; font: 600 28px/32px Lato, sans-serif; font-variant-ligatures: none; }
.card p { margin: 8px 0 0; color: #6b6776; font-size: 18px; line-height: 24px; }
.to-top { position: absolute; right: 19px; bottom: 18px; width: 50px; height: 50px; border-radius: 50%; display: grid; place-items: center; background: var(--brand); }
.to-top svg { width: 35px; height: 35px; }
.scrollbar { flex: none; width: 21px; display: flex; flex-direction: column; align-items: center; padding: 9px 0 8px; background: #f1f1f1; }
.scrollbar svg { width: 10px; height: 6px; }
.lead { flex: 690; }
.thumb { width: 17px; height: 80px; background: #c1c1c1; }
.trail { flex: 101; }
.share { position: absolute; left: 711px; bottom: 11px; display: flex; align-items: center; height: 54px; padding: 0 15px 0 11px; background: #303135; border: 1px solid #6c6d70; box-shadow: 0 2px 5px rgba(0, 0, 0, .4); color: #fff; font-size: 14px; white-space: nowrap; }
.share svg { width: 10px; height: 14px; margin-right: 11px; }
.stop { height: 40px; margin: 0 13px 0 15px; padding: 0 22px; border-radius: 4px; background: #8ab4f8; color: #202124; }
.hide { color: #8ab4f8; }

/* taskbar */
.taskbar { flex: none; display: flex; height: 50px; background: linear-gradient(90deg, #201f21, #232a33 30%, #33282d 50%, #232429 62%, #20252d 70%, #302629 77%, #27272b 85%); color: #fff; }
.start { width: 60px; display: grid; place-items: center; }
.start svg { width: 20px; height: 20px; }
.search { width: 430px; display: flex; align-items: center; padding-left: 14px; background: #333; border: 1px solid #5c5c5c; }
.search svg { width: 22px; height: 22px; }
.search input { flex: 1; min-width: 0; margin-left: 13px; padding: 0; border: 0; background: none; color: #fff; font: 18px var(--ui); }
.search input::placeholder { color: #d6d6d6; opacity: 1; }
.apps { display: flex; gap: 11px; padding-left: 4px; }
.apps button { position: relative; width: 51px; display: grid; place-items: center; }
.apps svg { width: 30px; height: 30px; }
.apps button:nth-child(3) svg, .apps button:nth-child(7) svg { width: 27px; height: 27px; }
.running::after { content: ""; position: absolute; left: 0; right: 0; bottom: 0; height: 3px; background: #76b9ed; }
.apps .focused { background: #57545a; box-shadow: -5px 0 #57545a, 5px 0 #454248; }
.focused::after { left: -5px; right: -5px; }
.count { position: absolute; width: 20px; height: 20px; border: 1px solid #a5a5a5; border-radius: 50%; background: #29282dcc; font-size: 13px; font-weight: 600; line-height: 18px; text-align: center; }
.apps .count { right: 0; bottom: 5px; }
.tray { display: flex; align-items: center; gap: 10px; margin-left: auto; padding-right: 20px; font-size: 17px; white-space: nowrap; }
.tray svg { width: 20px; height: 20px; }
.tray .sun { width: 27px; height: 27px; }
.weather { display: flex; gap: 11px; margin-right: 8px; }
.lang { font-size: 15px; margin-left: 3px; }
.clock { display: flex; flex-direction: column; align-items: center; margin: 0 14px 0 6px; font-size: 14px; line-height: 23px; }
.notify { position: relative; }
.notify svg, .tray .notify svg { width: 30px; height: 30px; }
.notify .count { right: -1px; bottom: -2px; }
```
